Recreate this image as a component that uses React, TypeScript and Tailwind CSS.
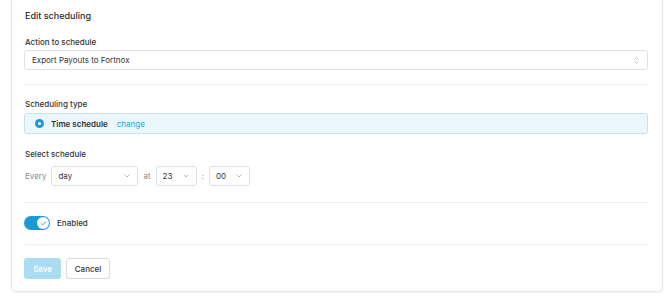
import { ChevronDown, ChevronsUpDown, Check } from "lucide-react";

const font = { fontFamily: "Inter, 'Noto Sans', sans-serif" };

function SmallSelect({ value, width }: { value: string; width: string }) {
  return (
    <div
      className={`flex h-[20px] ${width} items-center justify-between rounded-[3px] border border-[#dcdfe4] bg-white pl-[6px] pr-[6px] text-[8px] text-[#333]`}
    >
      <span>{value}</span>
      <ChevronDown className="h-[8px] w-[8px] text-[#999]" strokeWidth={2} />
    </div>
  );
}

export default function App() {
  return (
    <div className="h-[296px] w-[670px] overflow-hidden bg-white" style={font}>
      {/* card, its top is scrolled out of view */}
      <div className="ml-[11px] w-[652px] rounded-b-[5px] border border-t-0 border-[#e4e6ea] bg-white pb-[12px] pl-[12px] pr-[14px] pt-[9px] shadow-[0_1px_2px_rgba(0,0,0,0.06)]">
        <h2 className="pl-px text-[9px] leading-[14px] font-medium text-[#2b2b2b]">Edit scheduling</h2>

        {/* action */}
        <div className="mt-[13px] pl-px text-[8px] leading-[12px] font-medium text-[#333]">Action to schedule</div>
        <div className="mt-[2px] flex h-[20px] w-full items-center justify-between rounded-[3px] border border-[#dcdfe4] pl-[7px] pr-[6px] text-[8px] text-[#333]">
          <span>Export Payouts to Fortnox</span>
          <ChevronsUpDown className="h-[9px] w-[9px] text-[#aaa]" strokeWidth={1.5} />
        </div>

        <div className="mt-[14px] h-px w-full bg-[#eceef1]" />

        {/* scheduling type */}
        <div className="mt-[13px] pl-px text-[8px] leading-[12px] font-medium text-[#333]">Scheduling type</div>
        <div className="mt-[3px] flex h-[21px] w-full items-center rounded-[3px] border border-[#c3e4f5] bg-[#ebf6fc] pl-[10px] text-[8px]">
          <span className="flex h-[9px] w-[9px] items-center justify-center rounded-full bg-[#1d9ad6]">
            <span className="h-[3px] w-[3px] rounded-full bg-white" />
          </span>
          <span className="ml-[7px] font-semibold text-[#333]">Time schedule</span>
          <span className="ml-[9px] text-[#2ea3db]">change</span>
        </div>

        {/* select schedule */}
        <div className="mt-[14px] pl-px text-[8px] leading-[12px] font-medium text-[#333]">Select schedule</div>
        <div className="mt-[6px] flex items-center pl-px text-[8px] text-[#888]">
          <span>Every</span>
          <div className="ml-[5px]">
            <SmallSelect value="day" width="w-[87px]" />
          </div>
          <span className="ml-[5px]">at</span>
          <div className="ml-[5px]">
            <SmallSelect value="23" width="w-[41px]" />
          </div>
          <span className="ml-[5px]">:</span>
          <div className="ml-[5px]">
            <SmallSelect value="00" width="w-[41px]" />
          </div>
        </div>

        <div className="mt-[16px] h-px w-full bg-[#eceef1]" />

        {/* enabled toggle */}
        <div className="mt-[13px] flex items-center">
          <div className="flex h-[14px] w-[26px] items-center justify-end rounded-full bg-[#1d9ad6] pr-[1px]">
            <span className="flex h-[12px] w-[12px] items-center justify-center rounded-full bg-white">
              <Check className="h-[7px] w-[7px] text-[#1d9ad6]" strokeWidth={3} />
            </span>
          </div>
          <span className="ml-[7px] text-[8px] font-medium text-[#333]">Enabled</span>
        </div>

        <div className="mt-[14px] h-px w-full bg-[#eceef1]" />

        {/* actions */}
        <div className="mt-[13px] flex items-center gap-[5px]">
          <button className="h-[21px] w-[37px] rounded-[3px] bg-[#acdcf2] text-[8px] font-medium text-white">
            Save
          </button>
          <button className="h-[21px] w-[44px] rounded-[3px] border border-[#d7dadf] bg-white text-[8px] font-medium text-[#333]">
            Cancel
          </button>
        </div>
      </div>
    </div>
  );
}
